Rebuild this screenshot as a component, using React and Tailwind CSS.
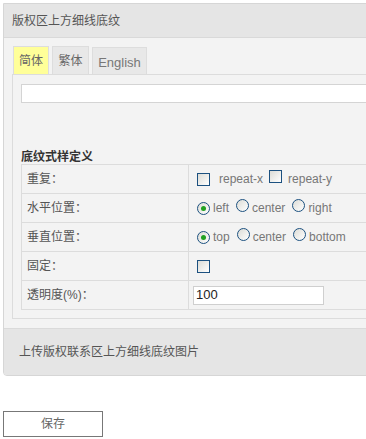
import React from 'react';

const font = { fontFamily: '"Liberation Sans", "Noto Sans CJK SC", sans-serif' };

const Checkbox = () => (
  <span className="inline-block w-[13px] h-[13px] border border-[#1c5180] bg-gradient-to-br from-[#dcdcd6] to-white" />
);

const Radio = ({ checked }) => (
  <span className="inline-flex items-center justify-center w-[13px] h-[13px] rounded-full border border-[#1c5180] bg-gradient-to-br from-[#dcdcd6] to-white">
    {checked && <span className="block w-[5px] h-[5px] rounded-full bg-[#21a121]" />}
  </span>
);

const Row = ({ label, children }) => (
  <div className="flex h-[29px] border-t border-[#dcdcdc]">
    <div className="w-[167px] shrink-0 flex items-center pl-[5px] border-r border-[#dcdcdc] text-[#555]">{label}</div>
    <div className="flex-1 flex items-center pl-[8px] text-[#777]">{children}</div>
  </div>
);

export default function App() {
  return (
    <div className="w-[366px] h-[439px] overflow-hidden bg-white text-[12px]" style={font}>
      <div className="ml-[3px] mt-[3px] w-[420px] border border-[#d6d6d6] rounded-b-[4px] bg-[#f3f3f3] overflow-hidden">
        {/* header */}
        <div className="h-[34px] bg-[#e5e5e5] border-b border-[#d9d9d9] flex items-center pl-[8px] text-[#555]">
          版权区上方细线底纹
        </div>

        <div className="pt-[8px] pl-[8px] pb-[9px]">
          {/* tabs */}
          <div className="flex gap-[3px] pl-[1px] h-[28px] items-end">
            <div className="w-[36px] h-[28px] bg-[#ffff99] border border-b-0 border-[#dddddd] flex items-center justify-center text-[#666]">简体</div>
            <div className="w-[37px] h-[28px] bg-[#e8e8e8] border border-b-0 border-[#dddddd] flex items-center justify-center text-[#666]">繁体</div>
            <div className="w-[55px] h-[27px] bg-[#e8e8e8] border border-b-0 border-[#dddddd] flex items-center justify-center pt-[3px] text-[#777] text-[13px]">English</div>
          </div>

          {/* tab box */}
          <div className="border border-r-0 border-[#dcdcdc] pl-[8px] pt-[9px] pb-[8px]">
            <div className="h-[19px] bg-white border border-[#d4d4d4]" />

            <div className="mt-[47px] font-bold text-[#333] leading-[14px]">底纹式样定义</div>

            <div className="border-l border-b border-[#dcdcdc]">
              <Row label="重复：">
                <Checkbox />
                <span className="ml-[9px]">repeat-x</span>
                <span className="ml-[6px]"><Checkbox /></span>
                <span className="ml-[6px]">repeat-y</span>
              </Row>
              <Row label="水平位置：">
                <Radio checked />
                <span className="ml-[3px]">left</span>
                <span className="ml-[7px]"><Radio /></span>
                <span className="ml-[3px]">center</span>
                <span className="ml-[7px]"><Radio /></span>
                <span className="ml-[3px]">right</span>
              </Row>
              <Row label="垂直位置：">
                <Radio checked />
                <span className="ml-[3px]">top</span>
                <span className="ml-[7px]"><Radio /></span>
                <span className="ml-[3px]">center</span>
                <span className="ml-[7px]"><Radio /></span>
                <span className="ml-[3px]">bottom</span>
              </Row>
              <Row label="固定：">
                <Checkbox />
              </Row>
              <div className="flex h-[29px] border-t border-[#dcdcdc]">
                <div className="w-[167px] shrink-0 flex items-center pl-[5px] border-r border-[#dcdcdc] text-[#555]">透明度(%)：</div>
                <div className="flex-1 flex items-center pl-[4px]">
                  <div className="w-[131px] h-[19px] bg-white border border-[#cfcfcf] flex items-center pl-[2px] text-[#222] text-[13px]">100</div>
                </div>
              </div>
            </div>
          </div>
        </div>

        {/* header 2 */}
        <div className="h-[47px] bg-[#e5e5e5] border-t border-[#dadada] flex items-center pl-[15px] text-[#555]">
          上传版权联系区上方细线底纹图片
        </div>
      </div>

      <div className="mt-[35px] ml-[3px] w-[100px] h-[26px] border border-[#777] bg-white flex items-center justify-center text-[#666]">
        保存
      </div>
    </div>
  );
}
